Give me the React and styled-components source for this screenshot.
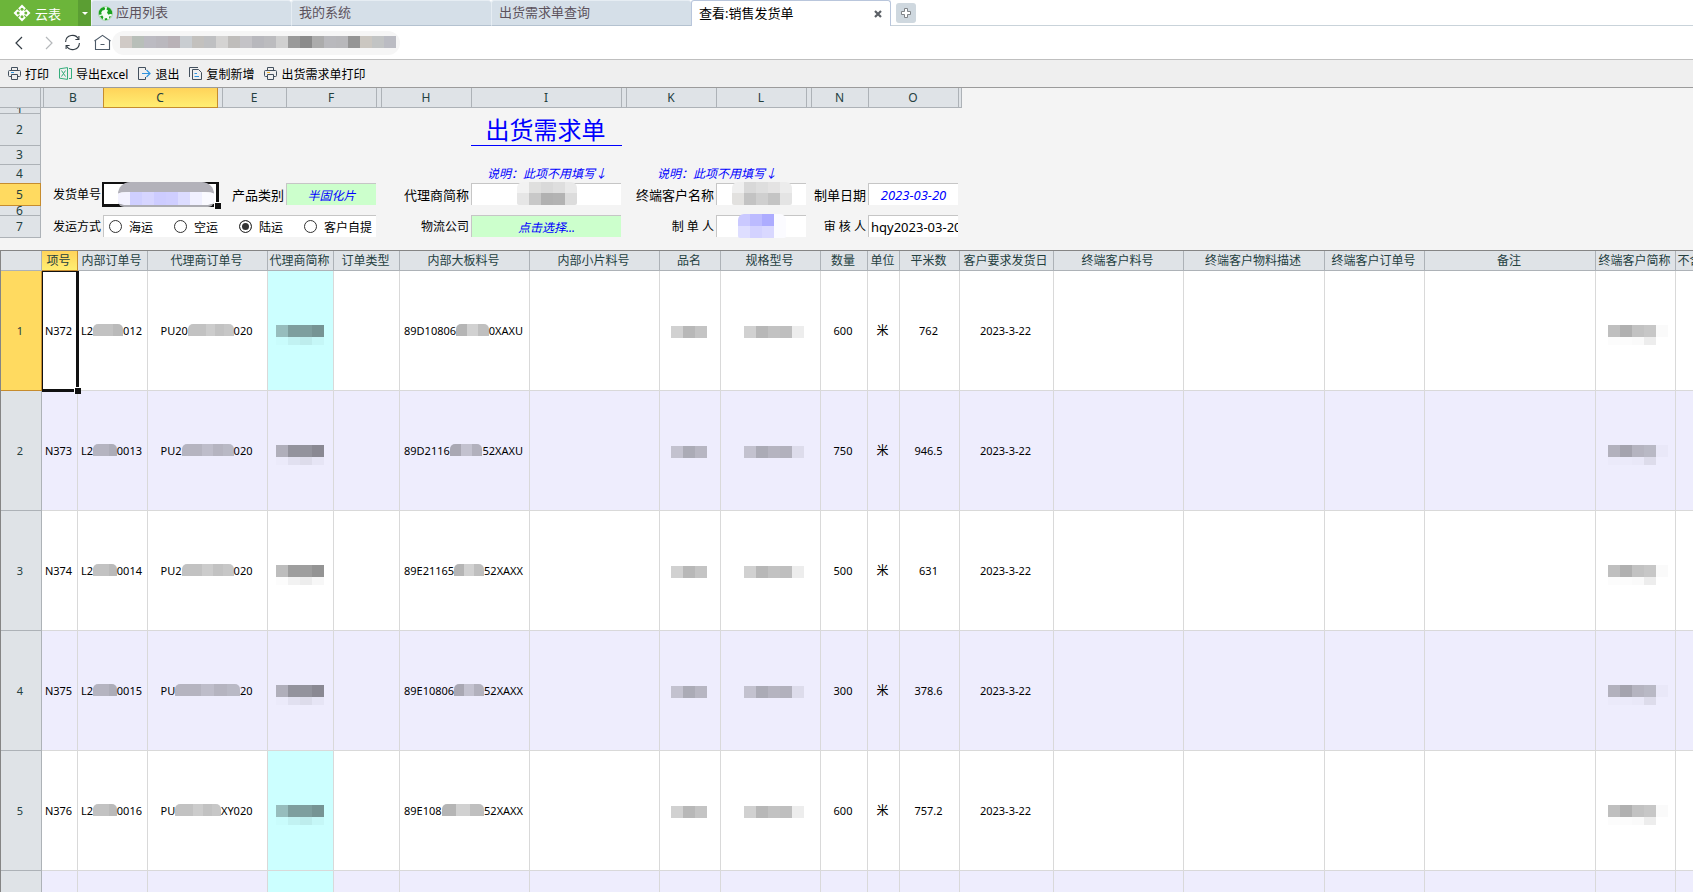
import React, { useState } from "react";
import styled, { createGlobalStyle, css } from "styled-components";

const GlobalStyle = createGlobalStyle`
    * {
        box-sizing: border-box;
    }
    body {
        margin: 0;
        background-color: #f4f4f4;
        overflow: hidden;
    }
    body, button, input {
        font-family: "Noto Sans", "Noto Sans CJK SC", sans-serif;
        font-size: 12px;
        color: #000;
    }
`

const URL_SHADES = [
    "#d0cac6", "#b8bfb9", "#bcbbc2", "#bab8be", "#b9b2b7", "#c9cdd1", "#c3c1be", "#bfc0c2",
    "#d4d3d2", "#bfbdbb", "#c4c3c7", "#b8b8bd", "#bcbcbf", "#d0d0d0", "#9a9a9a", "#8b8b8b",
    "#acacac", "#b9b9bd", "#b8b8bb", "#959595", "#cbc7c1", "#c2c4c4", "#bbbcc3",
];

const grey = (alpha) => `rgba(0, 0, 0, ${alpha})`;
const CODE_SHADES = [0.24, 0.24, 0.27].map(grey);
const LONG_SHADES = [0.24, 0.24, 0.2, 0.24, 0.22].map(grey);
const PART_SHADES = [0.29, 0.18, 0.25].map(grey);
const AGENT_SHADES = [0.26, 0.38, 0.38, 0.42].map(grey);
const AGENT_TAIL = [0.01, 0.05, 0.07, 0.03].map(grey);
const NAME_SHADES = [0.18, 0.28, 0.23].map(grey);
const SPEC_SHADES = [0.18, 0.28, 0.24, 0.25, 0.07].map(grey);
const CLIENT_SHADES = [0.25, 0.31, 0.24, 0.22, 0.02].map(grey);
const CLIENT_TAIL = [0.01, 0.01, 0.02, 0.07, 0].map(grey);

const FORM_COLUMNS = [
    { name: "", width: 3 },
    { name: "B", width: 60 },
    { name: "C", width: 114, active: true },
    { name: "", width: 5 },
    { name: "E", width: 64 },
    { name: "F", width: 90 },
    { name: "", width: 5 },
    { name: "H", width: 90 },
    { name: "I", width: 150 },
    { name: "", width: 5 },
    { name: "K", width: 90 },
    { name: "L", width: 90 },
    { name: "", width: 5 },
    { name: "N", width: 57 },
    { name: "O", width: 90 },
    { name: "", width: 3 },
];
const FORM_ROWS = [6, 32, 19, 19, 22, 10, 22];

const COLUMNS = [
    { title: "项号", width: 36 },
    { title: "内部订单号", width: 70 },
    { title: "代理商订单号", width: 120 },
    { title: "代理商简称", width: 66 },
    { title: "订单类型", width: 66 },
    { title: "内部大板料号", width: 130 },
    { title: "内部小片料号", width: 130 },
    { title: "品名", width: 61 },
    { title: "规格型号", width: 100 },
    { title: "数量", width: 47 },
    { title: "单位", width: 32 },
    { title: "平米数", width: 60 },
    { title: "客户要求发货日", width: 94 },
    { title: "终端客户料号", width: 130 },
    { title: "终端客户物料描述", width: 141 },
    { title: "终端客户订单号", width: 100 },
    { title: "备注", width: 171 },
    { title: "终端客户简称", width: 80 },
    { title: "不含税单价", width: 66 },
];

const ROWS = [
    { item: "N372", order: ["L2", "012"], agentOrder: ["PU20", "020"], part: ["89D10806", "0XAXU"], qty: "600", area: "762", cyan: true },
    { item: "N373", order: ["L2", "0013"], agentOrder: ["PU2", "020"], part: ["89D2116", "52XAXU"], qty: "750", area: "946.5" },
    { item: "N374", order: ["L2", "0014"], agentOrder: ["PU2", "020"], part: ["89E21165", "52XAXX"], qty: "500", area: "631" },
    { item: "N375", order: ["L2", "0015"], agentOrder: ["PU", "20"], part: ["89E10806", "52XAXX"], qty: "300", area: "378.6" },
    { item: "N376", order: ["L2", "0016"], agentOrder: ["PU", "XY020"], part: ["89E108", "52XAXX"], qty: "600", area: "757.2", cyan: true },
];

function LogoIcon() {
    return (
        <svg width="18" height="18" viewBox="0 0 18 18">
            <path d="M9 .5 17.5 9 9 17.5 .5 9Z" fill="#fff" />
            <g fill="#6cb53a">
                <circle cx="9" cy="5.2" r="1.5" />
                <circle cx="9" cy="12.8" r="1.5" />
                <circle cx="5.2" cy="9" r="1.5" />
                <circle cx="12.8" cy="9" r="1.5" />
            </g>
            <path d="M4 4 6.6 6.6M14 4 11.4 6.6M4 14 6.6 11.4M14 14 11.4 11.4" stroke="#6cb53a" strokeWidth="1.2" />
        </svg>
    );
}

function GlobeIcon() {
    return (
        <svg width="15" height="15" viewBox="0 0 15 15">
            <circle cx="7.5" cy="7.5" r="6.9" fill="#f4fbf4" stroke="#7cc47c" strokeWidth="0.6" />
            <g fill="#1ca321">
                <path d="M5.8 .9 3 2.2 1 5 .8 8.4 2 8.8 3.8 8.2 3.2 6.4 4.4 4.6 6.6 4 7.2 2Z" />
                <path d="M9.4 1 8.4 3.4 10 4.4 9 6.8 10.6 8.8 12 8 14.2 8.2 14 5.2 12.2 2.4Z" />
                <path d="M2 10.2 4.4 9.6 5.4 11.2 4.4 13.4Z" />
                <path d="M6.6 12.4 8.8 12 9.6 13.8 7 14.2Z" />
                <path d="M11 10.4 13.2 10.2 11.4 12.8Z" />
            </g>
        </svg>
    );
}

function RefreshIcon() {
    return (
        <svg width="17" height="17" viewBox="0 0 17 17" fill="none" stroke="#333c44" strokeWidth="1.1">
            <path d="M1.6 8A6.8 6.8 0 0 1 14.6 5.4M15.4 9A6.8 6.8 0 0 1 2.4 11.6" />
            <path d="M14.9 2V5.5H11.4M2.1 15V11.5H5.6" />
        </svg>
    );
}

function HomeIcon() {
    return (
        <svg width="17" height="17" viewBox="0 0 17 17" fill="none" stroke="#4d5a68" strokeWidth="1.1">
            <path d="M1.5 15.5V6.2L8.5 1.4 15.5 6.2V15.5ZM6.5 10.5H10.5M.5 7 1.5 6.2M16.5 7 15.5 6.2" />
        </svg>
    );
}

function PrintIcon({ accent }) {
    return (
        <svg width="13" height="13" viewBox="0 0 13 13" fill="none" stroke="#43505e">
            <path d="M3.5 3.5V.5H9.5V3.5M3 9.5H1.5Q.5 9.5 .5 8.5V4.5Q.5 3.5 1.5 3.5H11.5Q12.5 3.5 12.5 4.5V8.5Q12.5 9.5 11.5 9.5H10M3.5 7.5H9.5V12.5H3.5Z" />
            <path d="M3 5.5H6" stroke={accent} />
        </svg>
    );
}

function ExcelIcon() {
    return (
        <svg width="13" height="13" viewBox="0 0 13 13" fill="none" stroke="#35ad7c">
            <path d="M.5 1.8 8.5 .6V12.4L.5 11.2ZM10 1.5H12.5V11.5H10M2.5 3.5 6.5 9.5M6.5 3.5 2.5 9.5" />
        </svg>
    );
}

function ExitIcon() {
    return (
        <svg width="13" height="13" viewBox="0 0 13 13" fill="none">
            <path d="M7.5 3V.5H.5V12.5H7.5V10" stroke="#43505e" />
            <path d="M4 6.5H12M8.5 3 12 6.5 8.5 10" stroke="#2f93dd" strokeWidth="1.2" />
        </svg>
    );
}

function CopyIcon() {
    return (
        <svg width="13" height="13" viewBox="0 0 13 13" fill="none" stroke="#43505e">
            <path d="M3.5 2.5H9.5L12.5 5.5V12.5H3.5ZM.5 10V.5H9" />
            <path d="M5.5 6.5H8M5.5 9.5H10" stroke="#2f93dd" />
        </svg>
    );
}

function Mosaic({ shades, tail, fluid }) {
    return (
        <MosaicBox $fluid={fluid} $tail={tail}>
            <MosaicLine $height={12}>
                {shades.map((shade, i) => <Block key={i} $shade={shade} $fluid={fluid} />)}
            </MosaicLine>
            {tail && (
                <MosaicLine $height={8}>
                    {tail.map((shade, i) => <Block key={i} $shade={shade} />)}
                </MosaicLine>
            )}
        </MosaicBox>
    );
}

function Masked({ parts, shades, width }) {
    return (
        <MaskedText $width={width}>
            {parts[0]}
            <Mosaic shades={shades} fluid />
            {parts[1]}
        </MaskedText>
    );
}

function Browser() {
    return (
        <header>
            <TabBar>
                <Brand type="button"><LogoIcon />云表</Brand>
                <BrandMenu type="button" aria-label="菜单" />
                <Tab href="#apps"><GlobeIcon />应用列表</Tab>
                <Tab href="#system">我的系统</Tab>
                <Tab href="#query">出货需求单查询</Tab>
                <ActiveTab>
                    查看:销售发货单
                    <CloseButton type="button" aria-label="关闭">
                        <svg width="8" height="8" viewBox="0 0 8 8" stroke="#5b6066" strokeWidth="2.2">
                            <path d="M1 1 7 7M7 1 1 7" />
                        </svg>
                    </CloseButton>
                </ActiveTab>
                <NewTab>
                    <AddButton type="button" aria-label="新建">
                        <svg width="12" height="12" viewBox="0 0 12 12" fill="#fff" stroke="#808488">
                            <path d="M4.5 1.5H7.5V4.5H10.5V7.5H7.5V10.5H4.5V7.5H1.5V4.5H4.5Z" />
                        </svg>
                    </AddButton>
                </NewTab>
            </TabBar>
            <AddressBar>
                <NavButton type="button" aria-label="后退">
                    <svg width="8" height="14" viewBox="0 0 8 14" fill="none" stroke="#333c44" strokeWidth="1.2">
                        <path d="M7 1 1 7 7 13" />
                    </svg>
                </NavButton>
                <NavButton type="button" aria-label="前进">
                    <svg width="8" height="14" viewBox="0 0 8 14" fill="none" stroke="#b5b8bb" strokeWidth="1.2">
                        <path d="M1 1 7 7 1 13" />
                    </svg>
                </NavButton>
                <NavGroup>
                    <NavButton type="button" aria-label="刷新"><RefreshIcon /></NavButton>
                    <NavButton type="button" aria-label="主页"><HomeIcon /></NavButton>
                </NavGroup>
                <Address><Mosaic shades={URL_SHADES} /></Address>
            </AddressBar>
            <Toolbar>
                <Tool type="button"><PrintIcon accent="#2f93dd" />打印</Tool>
                <Tool type="button"><ExcelIcon />导出Excel</Tool>
                <Tool type="button"><ExitIcon />退出</Tool>
                <Tool type="button"><CopyIcon />复制新增</Tool>
                <Tool type="button"><PrintIcon accent="#f5b52e" />出货需求单打印</Tool>
            </Toolbar>
        </header>
    );
}

function OrderForm() {
    const [shipping, setShipping] = useState("陆运");

    return (
        <FormGrid>
            <GridHead $col={1} $row={1} />
            {FORM_COLUMNS.map((column, i) => (
                <GridHead key={i} $col={i + 2} $row={1} $active={column.active}>{column.name}</GridHead>
            ))}
            {FORM_ROWS.map((height, i) => (
                <GridHead key={i} $col={1} $row={i + 2} $activeRow={i === 4}>{i + 1}</GridHead>
            ))}

            <Title>出货需求单</Title>
            <Note $col={10}>说明：此项不用填写↓</Note>
            <Note $col={12} $span={2}>说明：此项不用填写↓</Note>

            <Label htmlFor="orderNo" $col={3} $row={6}>发货单号</Label>
            <Field $col={4} $row={6} $selected>
                <TextInput id="orderNo" />
                <NumberMask>
                    {["#f3f2ff", "#cfcfff", "#d6d5ff", "#cdccff", "#cfceff", "#dcdcff", "#f0f0ff", "#fafaff"].map((shade, i) => (
                        <Block key={i} $shade={shade} />
                    ))}
                </NumberMask>
                <Handle />
            </Field>
            <Label htmlFor="category" $col={6} $row={6} $large>产品类别</Label>
            <Field $col={7} $row={6} $green>
                <TextInput id="category" defaultValue="半固化片" $blue />
            </Field>
            <Label htmlFor="agent" $col={9} $row={6} $large>代理商简称</Label>
            <Field $col={10} $row={6}>
                <TextInput id="agent" />
                <FieldMask>
                    <MosaicLine $height={11}>
                        {["#f2f2f2", "#dfdfde", "#d9d9d9", "#dedede", "#e9e9e9"].map((shade, i) => <Block key={i} $shade={shade} />)}
                    </MosaicLine>
                    <MosaicLine $height={12}>
                        {["#e6e6e6", "#c8c8c8", "#b1b1b1", "#b3b3b3", "#dcdcdc"].map((shade, i) => <Block key={i} $shade={shade} />)}
                    </MosaicLine>
                </FieldMask>
            </Field>
            <Label htmlFor="client" $col={12} $row={6} $large>终端客户名称</Label>
            <Field $col={13} $row={6}>
                <TextInput id="client" />
                <FieldMask>
                    <MosaicLine $height={11}>
                        {["#efefef", "#d8d8d8", "#dedede", "#e4e3e3", "#ececec"].map((shade, i) => <Block key={i} $shade={shade} />)}
                    </MosaicLine>
                    <MosaicLine $height={12}>
                        {["#e2e1df", "#c3c3c3", "#cfcfcf", "#c4c4c4", "#e4e4e4"].map((shade, i) => <Block key={i} $shade={shade} />)}
                    </MosaicLine>
                </FieldMask>
            </Field>
            <Label htmlFor="date" $col={15} $row={6} $large>制单日期</Label>
            <Field $col={16} $row={6}>
                <TextInput id="date" defaultValue="2023-03-20" $blue $large />
            </Field>

            <Label as="span" id="shipping" $col={3} $row={8}>发运方式</Label>
            <Field $col={4} $row={8} $span={4} role="radiogroup" aria-labelledby="shipping">
                {["海运", "空运", "陆运", "客户自提"].map((name) => (
                    <RadioLabel key={name}>
                        <Radio
                            type="radio"
                            name="shipping"
                            checked={shipping === name}
                            onChange={() => setShipping(name)}
                        />
                        {name}
                    </RadioLabel>
                ))}
            </Field>
            <Label htmlFor="carrier" $col={9} $row={8}>物流公司</Label>
            <Field $col={10} $row={8} $green>
                <PickButton id="carrier" type="button">点击选择...</PickButton>
            </Field>
            <Label htmlFor="maker" $col={12} $row={8}>制 单 人</Label>
            <Field $col={13} $row={8}>
                <TextInput id="maker" />
                <FieldMask>
                    <MosaicLine $height={12}>
                        {["#cac9ff", "#bcbbff", "#adacff", "#fbfbff"].map((shade, i) => <Block key={i} $shade={shade} />)}
                    </MosaicLine>
                    <MosaicLine $height={12}>
                        {["#dedeff", "#d3d2ff", "#d9d8ff", "#fbfbff"].map((shade, i) => <Block key={i} $shade={shade} />)}
                    </MosaicLine>
                </FieldMask>
            </Field>
            <Label htmlFor="auditor" $col={15} $row={8}>审 核 人</Label>
            <Field $col={16} $row={8}>
                <TextInput id="auditor" defaultValue="hqy2023-03-20" $left $large />
            </Field>
        </FormGrid>
    );
}

function DetailTable() {
    return (
        <TableArea>
            <Table>
                <colgroup>
                    <Col $width={41} />
                    {COLUMNS.map((column) => <Col key={column.title} $width={column.width} />)}
                </colgroup>
                <thead>
                    <tr>
                        <HeadCell />
                        {COLUMNS.map((column, i) => (
                            <HeadCell key={column.title} scope="col" $active={i === 0}>{column.title}</HeadCell>
                        ))}
                    </tr>
                </thead>
                <tbody>
                    {ROWS.map((row, i) => (
                        <BodyRow key={row.item}>
                            <RowHead scope="row" $active={i === 0}>{i + 1}</RowHead>
                            <Cell>{row.item}{i === 0 && <CellFrame><Handle /></CellFrame>}</Cell>
                            <Cell><Masked parts={row.order} shades={CODE_SHADES} width={61} /></Cell>
                            <Cell><Masked parts={row.agentOrder} shades={LONG_SHADES} width={92} /></Cell>
                            <Cell $cyan={row.cyan}><Mosaic shades={AGENT_SHADES} tail={AGENT_TAIL} /></Cell>
                            <Cell />
                            <Cell><Masked parts={row.part} shades={PART_SHADES} width={119} /></Cell>
                            <Cell />
                            <Cell><Mosaic shades={NAME_SHADES} /></Cell>
                            <Cell $shift={8}><Mosaic shades={SPEC_SHADES} /></Cell>
                            <Cell>{row.qty}</Cell>
                            <Cell $large>米</Cell>
                            <Cell>{row.area}</Cell>
                            <Cell>2023-3-22</Cell>
                            <Cell />
                            <Cell />
                            <Cell />
                            <Cell />
                            <Cell $shift={6}><Mosaic shades={CLIENT_SHADES} tail={CLIENT_TAIL} /></Cell>
                            <Cell />
                        </BodyRow>
                    ))}
                    <BodyRow>
                        <RowHead />
                        {COLUMNS.map((column, i) => <Cell key={column.title} $cyan={i === 3} />)}
                    </BodyRow>
                </tbody>
            </Table>
        </TableArea>
    );
}

function App() {
    return (
        <Page>
            <GlobalStyle />
            <Browser />
            <OrderForm />
            <DetailTable />
        </Page>
    );
}

export default App;

const Page = styled.div`
    display: flex;
    flex-direction: column;
    height: 100vh;
    overflow: hidden;
`
const TabBar = styled.nav`
    display: flex;
    height: 26px;
    background-color: #fff;
`
const Brand = styled.button`
    display: flex;
    align-items: center;
    gap: 4px;
    width: 78px;
    padding: 0 0 0 13px;
    border: none;
    background-color: #6cb53a;
    color: #fff;
    font-size: 13px;
`
const BrandMenu = styled.button`
    display: flex;
    align-items: center;
    justify-content: center;
    width: 13px;
    padding: 0;
    border: none;
    background-color: #5b9e33;

    &::after {
        content: "";
        border: 3px solid transparent;
        border-top-color: #fff;
        border-bottom: none;
    }
`
const tabShape = css`
    display: flex;
    align-items: center;
    gap: 3px;
    flex: 0 1 200px;
    padding: 0 8px 2px 7px;
    border-left: 1px solid #e6edf3;
    font-size: 13px;
    line-height: 18px;
    white-space: nowrap;
`
const Tab = styled.a`
    ${tabShape}
    border-top: 1px solid #e6edf3;
    border-bottom: 1px solid #b4c2d0;
    border-radius: 3px 3px 0 0;
    background-color: #d5dfe8;
    color: #5c525c;
    text-decoration: none;

    svg {
        margin: 2px 0 0 -1px;
    }
`
const ActiveTab = styled.div`
    ${tabShape}
    justify-content: space-between;
    border: 1px solid #b9c6dc;
    border-bottom: none;
    border-radius: 3px 3px 0 0;
    background-color: #fff;
    color: #000;
`
const CloseButton = styled.button`
    display: flex;
    padding: 2px 0 0;
    border: none;
    background: none;
`
const NewTab = styled.div`
    flex: 1;
    display: flex;
    align-items: center;
    padding-left: 5px;
    border-bottom: 1px solid #c9d3da;
`
const AddButton = styled.button`
    display: flex;
    align-items: center;
    justify-content: center;
    width: 20px;
    height: 20px;
    padding: 0;
    border: none;
    border-radius: 3px;
    background-color: #cfd8df;
`
const AddressBar = styled.div`
    display: flex;
    align-items: center;
    height: 34px;
    padding-left: 9px;
    border-bottom: 1px solid #bfbfbf;
    background-color: #fff;
`
const NavButton = styled.button`
    display: flex;
    align-items: center;
    justify-content: center;
    width: 20px;
    margin-right: 10px;
    padding: 0;
    border: none;
    background: none;
`
const NavGroup = styled.div`
    display: flex;
    margin-left: -7px;
`
const Address = styled.div`
    display: flex;
    align-items: center;
    height: 24px;
    margin-left: -10px;
    padding: 0 4px 2px 8px;
    border-radius: 12px;
    background-color: #f6f6f6;
`
const Toolbar = styled.div`
    display: flex;
    gap: 10px;
    height: 28px;
    padding-left: 8px;
    border-bottom: 1px solid #9b9b9b;
    background-color: #efefef;
`
const Tool = styled.button`
    display: flex;
    align-items: center;
    gap: 4px;
    padding: 0;
    border: none;
    background: none;
    white-space: nowrap;
`
const MosaicBox = styled.span`
    display: inline-block;
    vertical-align: middle;
    ${({ $fluid }) => $fluid && css`
        flex: 1;
        overflow: hidden;
        margin-bottom: 1px;
        border-radius: 5px 5px 0 0;
    `}
    ${({ $tail }) => $tail && css`
        margin-top: 8px;
    `}
`
const MosaicLine = styled.span`
    display: flex;
    height: ${({ $height }) => $height}px;
`
const Block = styled.span`
    flex: ${({ $fluid }) => ($fluid ? "1" : "0 0 12px")};
    background-color: ${({ $shade }) => $shade};
`
const MaskedText = styled.span`
    display: flex;
    align-items: center;
    width: ${({ $width }) => $width}px;
    margin: 0 auto;
`
const goldHead = css`
    background: linear-gradient(#ffd35a, #ffee72);
    border-color: #c68c2e;
`
const FormGrid = styled.form`
    display: grid;
    grid-template-columns: 41px ${FORM_COLUMNS.map((column) => `${column.width}px`).join(" ")};
    grid-template-rows: 20px ${FORM_ROWS.map((height) => `${height}px`).join(" ")};
    flex: none;
    margin-bottom: 12px;
`
const GridHead = styled.div`
    grid-column: ${({ $col }) => $col};
    grid-row: ${({ $row }) => $row};
    display: flex;
    align-items: center;
    justify-content: center;
    overflow: hidden;
    padding-right: 1px;
    border: 0 solid #adb2b7;
    border-width: 0 1px 1px 0;
    background-color: #dfe3e7;
    color: #24403f;
    line-height: 14px;
    ${({ $active }) => $active && css`
        ${goldHead}
        margin-left: -1px;
        border-left-width: 1px;
    `}
    ${({ $activeRow }) => $activeRow && css`
        margin-top: -1px;
        border-top-width: 1px;
        border-color: #c68c2e;
        background-color: #ffda60;
    `}
`
const Title = styled.h1`
    grid-column: 10;
    grid-row: 3;
    margin: 0 0 0 -1px;
    padding-right: 2px;
    border-bottom: 1px solid #00f;
    color: #00f;
    font-size: 24px;
    font-weight: normal;
    line-height: 32px;
    text-align: center;
`
const Note = styled.p`
    grid-column: ${({ $col, $span = 1 }) => `${$col} / span ${$span}`};
    grid-row: 5;
    margin: 0;
    color: #00f;
    font-style: italic;
    line-height: 18px;
    text-align: center;
    white-space: nowrap;
`
const Label = styled.label`
    grid-column: ${({ $col }) => $col};
    grid-row: ${({ $row }) => $row};
    align-self: center;
    padding-right: 3px;
    font-size: ${({ $large }) => ($large ? 13 : 12)}px;
    line-height: 18px;
    text-align: right;
    white-space: nowrap;
`
const Field = styled.div`
    grid-column: ${({ $col, $span = 1 }) => `${$col} / span ${$span}`};
    grid-row: ${({ $row }) => $row};
    position: relative;
    display: flex;
    align-items: center;
    min-width: 0;
    margin: -1px 1px 1px -1px;
    border: 0 solid #c6c6c6;
    border-width: 1px 0 0 1px;
    background-color: ${({ $green }) => ($green ? "#cfc" : "#fff")};
    ${({ $selected }) => $selected && css`
        margin: -2px -1px -1px -2px;
        border: 3px solid #111;
        border-width: 2px 3px 3px 2px;
    `}
`
const TextInput = styled.input`
    flex: 1;
    min-width: 0;
    height: 100%;
    padding: 0 2px;
    border: none;
    outline: none;
    background: none;
    font-size: ${({ $large }) => ($large ? 13 : 12)}px;
    text-align: ${({ $left }) => ($left ? "left" : "center")};
    ${({ $left }) => $left && css`
        padding-right: 0;
    `}
    ${({ $blue }) => $blue && css`
        color: #00f;
        font-style: italic;
    `}
`
const PickButton = styled.button`
    flex: 1;
    padding: 0;
    border: none;
    background: none;
    color: #00f;
    font-style: italic;
`
const NumberMask = styled.span`
    position: absolute;
    top: -2px;
    left: 14px;
    display: flex;
    height: 25px;
    overflow: hidden;
    border-top: 10px solid #b3b2ba;
    border-bottom: 2px solid #acacb2;
    border-radius: 12px 12px 6px 6px;
`
const FieldMask = styled.span`
    position: absolute;
    top: -2px;
    left: 50%;
    transform: translateX(-50%);
    overflow: hidden;
    border-radius: 6px 6px 2px 2px;
`
const Handle = styled.span`
    position: absolute;
    right: -5px;
    bottom: -5px;
    width: 7px;
    height: 7px;
    border: 1px solid #fff;
    border-width: 1px 0 0 1px;
    background-color: #111;
`
const RadioLabel = styled.label`
    display: flex;
    align-items: center;
    gap: 7px;
    width: 65px;
    padding-left: 5px;
    white-space: nowrap;
`
const Radio = styled.input`
    appearance: none;
    flex: none;
    width: 13px;
    height: 13px;
    margin: 0;
    border: 1px solid #333;
    border-radius: 50%;
    background-color: #fff;

    &:checked {
        background-color: #333;
        box-shadow: inset 0 0 0 2px #fff;
    }
`
const TableArea = styled.main`
    flex: 1;
    min-height: 0;
    overflow: hidden;
    border: 0 solid #858585;
    border-width: 1px 0 0 1px;
`
const Table = styled.table`
    table-layout: fixed;
    width: ${41 + COLUMNS.reduce((sum, column) => sum + column.width, 0)}px;
    border-spacing: 0;
`
const Col = styled.col`
    width: ${({ $width }) => $width}px;
`
const HeadCell = styled.th`
    height: 20px;
    padding: 0 2px 0 0;
    border: 0 solid #adb2b7;
    border-width: 0 1px 1px 0;
    background-color: #dfe3e7;
    color: #24403f;
    font-weight: normal;
    line-height: 16px;
    white-space: nowrap;
    ${({ $active }) => $active && goldHead}
`
const RowHead = styled(HeadCell)`
    font-size: 11px;
    ${({ $active }) => $active && css`
        border-color: #c68c2e;
        background: #ffda60;
    `}
`
const BodyRow = styled.tr`
    height: 120px;
    background-color: #fff;

    &:nth-child(even) {
        background-color: #eeedfd;
    }
`
const Cell = styled.td`
    position: relative;
    padding: 0 2px 0 ${({ $shift = 0 }) => $shift}px;
    border: 0 solid #d9d9d9;
    border-width: 0 1px 1px 0;
    font-size: ${({ $large }) => ($large ? 12 : 11)}px;
    line-height: 16px;
    text-align: center;
    white-space: nowrap;
    ${({ $cyan }) => $cyan && css`
        background-color: #cff;
    `}
`
const CellFrame = styled.span`
    position: absolute;
    top: 0;
    right: -2px;
    bottom: -2px;
    left: 0;
    z-index: 1;
    border: 1px solid #111;
    border-width: 1px 3px 3px 1px;
`
